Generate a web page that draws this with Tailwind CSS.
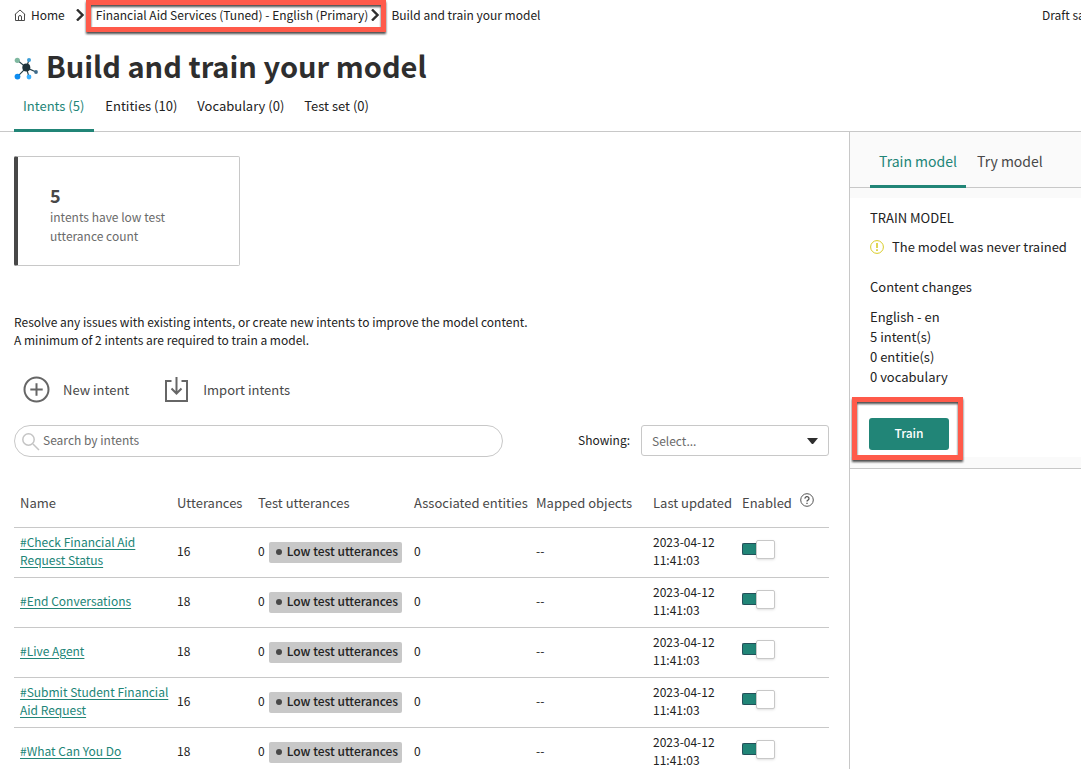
<!DOCTYPE html>
<html lang="en">
<head>
<meta charset="utf-8">
<meta name="viewport" content="width=device-width, initial-scale=1">
<title>Build and train your model</title>
<script src="https://cdn.jsdelivr.net/npm/@tailwindcss/browser@4"></script>
</head>
<body class="flex h-screen flex-col overflow-hidden bg-white font-['Noto_Sans_CJK_SC',sans-serif] text-[12px] leading-[18px] text-[#222]">

<header class="shrink-0 border-b border-[#c8c8c8] pl-[14px]">
  <div class="flex h-[30px] items-center justify-between">
    <nav aria-label="Breadcrumb" class="flex shrink-0 items-center whitespace-nowrap">
      <a href="#" class="flex items-center gap-[5px]">
        <svg class="size-3" viewBox="0 0 12 12" fill="none" stroke="#4a4a4a" stroke-width="1"><path d="M.8 5.600 6 1l5.200 4.600M1.500 5v6.500h9V5M4.500 11.500V8a1.500 1.500 0 0 1 3 0v3.500"/></svg>
        Home
      </a>
      <svg class="mr-3 ml-[11px] h-3 w-2" viewBox="0 0 8 12" fill="none" stroke="#2e2e2e" stroke-width="2.400"><path d="m1 .5 5.500 5.500L1 11.500"/></svg>
      <span class="relative flex items-center">
        <a href="#">Financial Aid Services (Tuned) - English (Primary)</a>
        <svg class="ml-[3px] h-3 w-2" viewBox="0 0 8 12" fill="none" stroke="#2e2e2e" stroke-width="2.400"><path d="m1 .5 5.500 5.500L1 11.500"/></svg>
        <span class="pointer-events-none absolute -top-[6px] -right-[7px] -bottom-2 -left-[10px] border-5 border-[#ff5a4a] drop-shadow-[0_2px_1px_rgba(0,0,0,0.7)]"></span>
      </span>
      <span class="ml-3">Build and train your model</span>
    </nav>
    <span class="w-[39px] whitespace-nowrap">Draft saved</span>
  </div>
  <div class="flex h-[67px] items-center gap-2 pt-[2px]">
    <svg class="mt-2 size-6" viewBox="0 0 24 24">
      <path d="M3.400 3.300l9 7.300M15 3l-2.700 7.600M22 15l-9.700-4.400M3.500 19.600l8.800-9M15 20l-2.700-9.400" stroke="#26404a" stroke-width="1.200"/>
      <circle cx="12.300" cy="10.600" r="4" fill="#1f333b"/>
      <circle cx="3.300" cy="3.300" r="2.600" fill="#7fb8a0"/><circle cx="15" cy="3" r="2" fill="#3d9dd6"/><circle cx="22" cy="15" r="1.900" fill="#3f6c8c"/><circle cx="3.500" cy="19.600" r="2.900" fill="#0d8cf0"/><circle cx="15" cy="20" r="2.400" fill="#38b0ff"/>
    </svg>
    <h1 class="text-[29px] leading-9 font-bold text-[#2e2e2e]">Build and train your model</h1>
  </div>
  <div role="tablist" class="-mb-px flex h-[35px] items-start gap-[2px] text-[13px]">
    <button role="tab" aria-selected="true" class="h-full rounded-t-xs border-b-3 border-[#218577] pr-[10px] pb-[14px] pl-[9px] text-[#218577]">Intents (5)</button>
    <button role="tab" aria-selected="false" class="px-[9px]">Entities (10)</button>
    <button role="tab" aria-selected="false" class="px-[9px]">Vocabulary (0)</button>
    <button role="tab" aria-selected="false" class="px-[9px]">Test set (0)</button>
  </div>
</header>

<div class="flex min-h-0 flex-1">
  <main class="min-w-0 flex-1 pt-6 pr-5 pl-[14px]">
    <section class="flex h-[110px] w-[226px] flex-col justify-center rounded-xs border border-l-4 border-[#c8c8c8] border-l-[#484848] pt-2 pr-10 pb-[3px] pl-8">
      <strong class="text-[18px] leading-6 text-[#484848]">5</strong>
      <p class="leading-[19px] text-[#6a6a6a]">intents have low test utterance count</p>
    </section>
    <p class="mt-[47px]">Resolve any issues with existing intents, or create new intents to improve the model content.<br>A minimum of 2 intents are required to train a model.</p>

    <div class="mt-[27px] flex items-center gap-8 pl-[9px] text-[13px] text-[#484848]">
      <button class="flex items-center gap-3">
        <svg class="size-7" viewBox="0 0 28 28" fill="none" stroke="#666" stroke-width="2"><circle cx="13.500" cy="13.500" r="12"/><path d="M13.500 7.300v12.400M7.300 13.500h12.400"/></svg>
        New intent
      </button>
      <button class="flex items-center gap-[14px]">
        <svg class="size-7" viewBox="0 0 28 28" fill="none" stroke="#666" stroke-width="2"><path d="M10.500 5H5v20h21V5h-5.500M15.500 1v16.500M10.500 12.500l5 5 5-5"/></svg>
        Import intents
      </button>
    </div>

    <div class="mt-[21px] flex items-start justify-between">
      <div class="relative w-3/5">
        <input type="search" aria-label="Search by intents" placeholder="Search by intents" class="h-8 w-full rounded-full border border-[#c8c8c8] pb-[3px] pl-7 placeholder:text-[#6a6a6a]">
        <svg class="absolute top-2 left-2 size-[18px]" viewBox="0 0 18 18" fill="none" stroke="#c4c4c4" stroke-width="1.500"><circle cx="6.500" cy="6.500" r="5.700"/><path d="m11 11 6 6"/></svg>
      </div>
      <div class="flex items-center gap-[11px]">
        <label for="showing" class="pb-[2px]">Showing:</label>
        <div class="relative">
          <select id="showing" class="block h-[31px] w-[188px] appearance-none rounded-[3px] border border-[#c8c8c8] bg-white pl-[10px] text-[#6a6a6a]"><option>Select...</option></select>
          <svg class="pointer-events-none absolute top-[13px] right-[11px] h-[6px] w-[11px]" viewBox="0 0 11 6" fill="#2e2e2e"><path d="M0 0h11L6.500 5.500q-1 1-2 0z"/></svg>
        </div>
      </div>
    </div>

    <table class="mt-6 w-full table-fixed border-collapse">
      <colgroup><col><col class="w-[81px]"><col class="w-[156px]"><col class="w-[122px]"><col class="w-[117px]"><col class="w-[89px]"><col class="w-[93px]"></colgroup>
      <thead>
        <tr class="h-[46px] border-b border-[#c8c8c8] text-left text-[13px] whitespace-nowrap text-[#484848]">
          <th class="pb-[2px] pl-[6px] font-normal">Name</th>
          <th class="pb-[2px] pl-[6px] font-normal">Utterances</th>
          <th class="pb-[2px] pl-[6px] font-normal">Test utterances</th>
          <th class="pb-[2px] pl-[6px] font-normal">Associated entities</th>
          <th class="pb-[2px] pl-[6px] font-normal">Mapped objects</th>
          <th class="pb-[2px] pl-[6px] font-normal">Last updated</th>
          <th class="pb-[2px] pl-[6px] font-normal"><span class="flex items-center gap-2">Enabled
            <button aria-label="Help" class="pb-[6px]"><svg class="size-[14px]" viewBox="0 0 14 14" fill="none" stroke="#555"><circle cx="7" cy="7" r="6.300"/><path stroke-width="1.300" d="M5 5.600a2 1.900 0 1 1 3 1.500Q7 7.600 7 8.600M7 9.800v1.300"/></svg></button></span></th>
        </tr>
      </thead>
      <tbody id="intents"></tbody>
    </table>
  </main>

  <aside class="w-[232px] shrink-0 border-l border-[#c8c8c8] text-[13px] leading-5">
    <div class="border-b border-[#c8c8c8] bg-[#fafafa] pb-[11px]">
      <div role="tablist" class="flex h-14 gap-[2px] border-b border-[#c8c8c8] pl-5 text-[14px]">
        <button role="tab" aria-selected="true" class="-mb-px rounded-t-xs border-b-3 border-[#218577] px-[9px] pt-[5px] text-[#218577]">Train model</button>
        <button role="tab" aria-selected="false" class="px-[9px] pt-[2px] text-[#484848]">Try model</button>
      </div>
      <div class="mt-[10px] bg-white px-5 pt-[10px] pb-[7px]">
        <h2>TRAIN MODEL</h2>
        <p class="mt-[9px] flex items-center gap-2 whitespace-nowrap">
          <svg class="size-[14px] shrink-0" viewBox="0 0 14 14" fill="none" stroke="#d9cc27"><circle cx="7" cy="7" r="6.400"/><path stroke-width="1.600" d="M7 3v5M7 9.300v1.600"/></svg>
          The model was never trained
        </p>
        <h3 class="mt-5">Content changes</h3>
        <p class="mt-[10px]">English - en<br>5 intent(s)<br>0 entitie(s)<br>0 vocabulary</p>
        <div class="relative mt-[31px] -ml-px w-20">
          <button class="block h-8 w-full rounded-[3px] bg-[#218577] pb-[2px] text-[12px] font-medium text-white">Train</button>
          <span class="pointer-events-none absolute -top-[21px] -right-[14px] -bottom-[10px] -left-[17px] border-5 border-[#ff5a4a] drop-shadow-[0_2px_1px_rgba(0,0,0,0.7)]"></span>
        </div>
      </div>
    </div>
  </aside>
</div>

<script>
const intents = [["#Check Financial Aid Request Status",16],["#End Conversations",18],["#Live Agent",18],["#Submit Student Financial Aid Request",16],["#What Can You Do",18]];
document.getElementById("intents").innerHTML = intents.map(([name, count]) => `
<tr class="h-[50px] border-b border-[#c8c8c8]">
  <td class="pb-[2px] pl-[6px]"><a href="#" class="text-[#218577] underline underline-offset-2">${name}</a></td>
  <td class="pb-[2px] pl-[6px]">${count}</td>
  <td class="pl-[6px]"><span class="flex items-center gap-1 whitespace-nowrap"><span class="pb-[3px]">0</span><span class="flex h-[21px] items-center gap-[5px] rounded-xs bg-[#c8c8c8] pr-1 pl-[7px] font-medium"><i class="size-[6px] rounded-full bg-[#484848]"></i><span class="pb-[2px]">Low test utterances</span></span></span></td>
  <td class="pb-[2px] pl-[6px]">0</td>
  <td class="pb-[2px] pl-[6px]">--</td>
  <td class="pb-[2px] pl-[6px]">2023-04-12<br>11:41:03</td>
  <td class="pb-[6px] pl-[6px]"><label class="flex items-center"><input type="checkbox" checked aria-label="Enable ${name}" class="sr-only"><span class="h-3 w-[14px] rounded-l-xs border border-r-0 border-[#24505a] bg-[#218577]"></span><span class="size-[19px] rounded-xs border border-[#c8c8c8] bg-white shadow-sm"></span></label></td>
</tr>`).join("");
</script>
</body>
</html>
